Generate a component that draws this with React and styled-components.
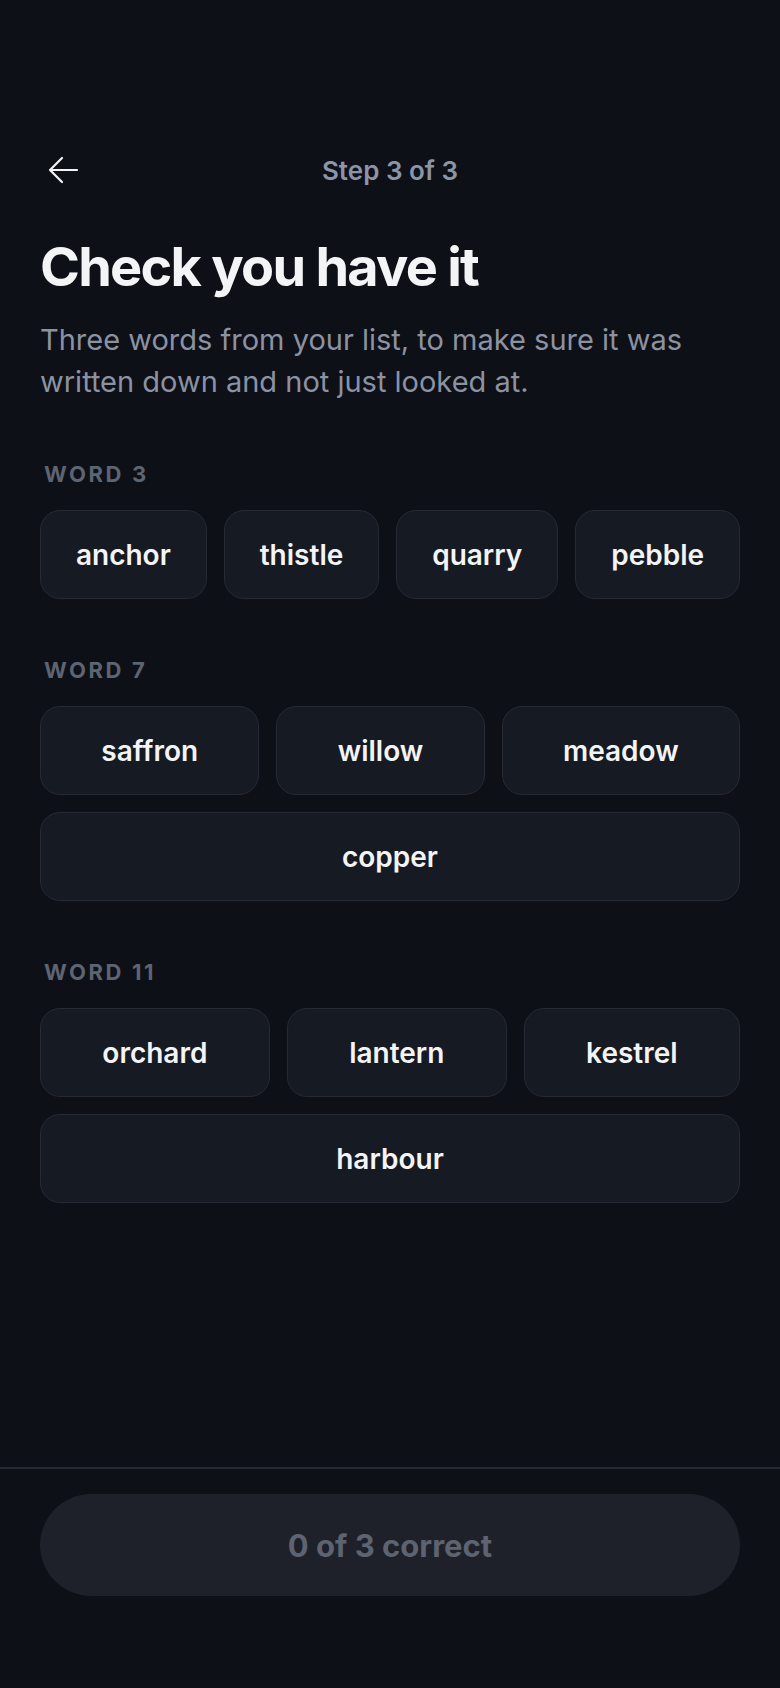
import React from "react";
import styled, { createGlobalStyle } from "styled-components";

const GlobalStyle = createGlobalStyle`
  * { box-sizing: border-box; }
  html, body {
    margin: 0;
    padding: 0;
    background: #0d1016;
  }
  body {
    font-family: "Inter", "Noto Sans", sans-serif;
    color: #f3f4f6;
  }
`;

const sections = [
  { label: "Word 3", words: ["anchor", "thistle", "quarry", "pebble"] },
  { label: "Word 7", words: ["saffron", "willow", "meadow", "copper"] },
  { label: "Word 11", words: ["orchard", "lantern", "kestrel", "harbour"] },
];

export default function App() {
  return (
    <>
      <GlobalStyle />
      <Page>
        <Main>
          <TopBar>
            <BackButton aria-label="Back">
              <svg width="32" height="28" viewBox="0 0 32 28" fill="none">
                <path
                  d="M30 14H3M15 2L3 14L15 26"
                  stroke="#f3f4f6"
                  strokeWidth="2.2"
                  strokeLinecap="round"
                  strokeLinejoin="round"
                />
              </svg>
            </BackButton>
            <StepText>Step 3 of 3</StepText>
            <Spacer />
          </TopBar>

          <Title>Check you have it</Title>
          <Intro>
            Three words from your list, to make sure it was written down and
            not just looked at.
          </Intro>

          {sections.map((s) => (
            <Section key={s.label}>
              <Label>{s.label}</Label>
              <Choices>
                {s.words.map((w) => (
                  <Choice key={w}>{w}</Choice>
                ))}
              </Choices>
            </Section>
          ))}
        </Main>

        <Footer>
          <SubmitButton disabled>0 of 3 correct</SubmitButton>
        </Footer>
      </Page>
    </>
  );
}

const Page = styled.div`
  min-height: 100vh;
  display: flex;
  flex-direction: column;
  background: #0d1016;
`;

const Main = styled.main`
  flex: 1;
  padding: 140px 40px 40px;
`;

const TopBar = styled.div`
  display: flex;
  align-items: center;
  justify-content: space-between;
  height: 60px;
`;

const BackButton = styled.button`
  width: 44px;
  height: 44px;
  padding: 0 0 0 7px;
  border: 0;
  background: none;
  display: flex;
  align-items: center;
  cursor: pointer;
`;

const Spacer = styled.div`
  width: 44px;
`;

const StepText = styled.div`
  font-size: 26px;
  font-weight: 600;
  color: #8b95a7;
`;

const Title = styled.h1`
  margin: 35px 0 0;
  font-size: 54px;
  line-height: 64px;
  font-weight: 700;
  letter-spacing: -0.032em;
  color: #f3f4f6;
`;

const Intro = styled.p`
  margin: 20px 0 0;
  font-size: 29px;
  line-height: 42px;
  color: #8b93a3;
`;

const Section = styled.section`
  margin-top: 57px;
`;

const Label = styled.div`
  padding-left: 4px;
  font-size: 22px;
  line-height: 28px;
  font-weight: 700;
  letter-spacing: 0.12em;
  text-transform: uppercase;
  color: #5d6472;
`;

const Choices = styled.div`
  margin-top: 22px;
  display: flex;
  flex-wrap: wrap;
  gap: 17px;
`;

const Choice = styled.button`
  flex: 1 1 auto;
  height: 89px;
  padding: 0 32px;
  border: 1.5px solid #262a35;
  border-radius: 20px;
  background: #161a23;
  color: #f3f4f6;
  font-family: "Inter", "Noto Sans", sans-serif;
  font-size: 28px;
  font-weight: 600;
  cursor: pointer;
`;

const Footer = styled.footer`
  border-top: 2px solid #242833;
  padding: 25px 40px 92px;
`;

const SubmitButton = styled.button`
  width: 100%;
  height: 102px;
  border: 0;
  border-radius: 51px;
  background: #1e212a;
  color: #5d6370;
  font-family: "Inter", "Noto Sans", sans-serif;
  font-size: 31px;
  font-weight: 700;
`;
